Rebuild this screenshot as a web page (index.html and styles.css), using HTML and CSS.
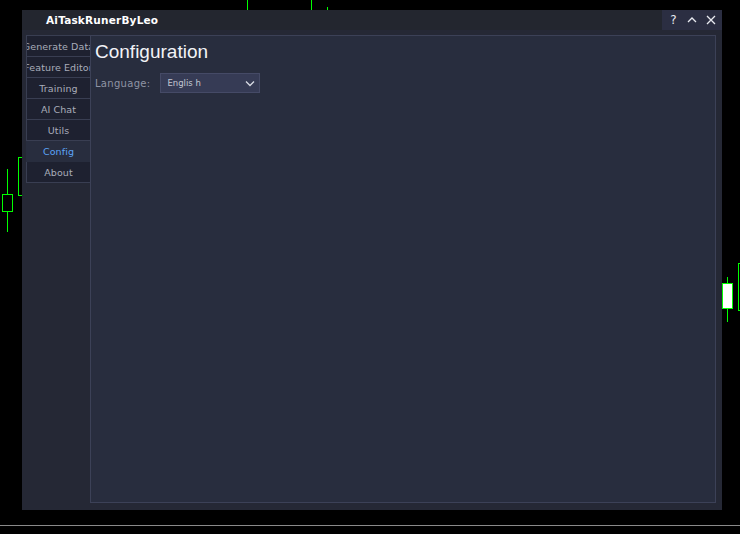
FILE: index.html
```html
<!DOCTYPE html>
<html lang="en">
<head>
    <meta charset="UTF-8">
    <title>AiTaskRunerByLeo</title>
    <link rel="stylesheet" href="styles.css">
</head>
<body>
    <!-- chart behind the tool window -->
    <svg class="chart" width="740" height="534" viewBox="0 0 740 534">
        <g stroke="#00ff00" stroke-width="1" fill="none">
            <line x1="247.5" y1="0" x2="247.5" y2="10"/>
            <line x1="311.5" y1="0" x2="311.5" y2="10"/>
            <line x1="327.5" y1="7" x2="327.5" y2="10"/>
            <line x1="7.5" y1="169" x2="7.5" y2="232"/>
            <rect x="2.5" y="194.5" width="10" height="17" fill="#000"/>
            <rect x="18.5" y="157.5" width="10" height="38" fill="#000"/>
            <line x1="727.5" y1="277" x2="727.5" y2="322"/>
            <rect x="722.5" y="283.5" width="10" height="25" fill="#fff"/>
            <rect x="738.5" y="263.5" width="10" height="47" fill="#000"/>
        </g>
        <line x1="0" y1="525.5" x2="740" y2="525.5" stroke="#8a8a8a"/>
    </svg>

    <div class="window">
        <div class="titlebar">
            <span class="title">AiTaskRunerByLeo</span>
            <div class="title-buttons">
                <span class="tb-btn">?</span>
                <svg class="tb-btn" width="10" height="10" viewBox="0 0 10 10">
                    <path d="M1 7 L5 3 L9 7" stroke="#e8eaf0" stroke-width="1.3" fill="none"/>
                </svg>
                <svg class="tb-btn" width="10" height="10" viewBox="0 0 10 10">
                    <path d="M1 1 L9 9 M9 1 L1 9" stroke="#e8eaf0" stroke-width="1.3" fill="none"/>
                </svg>
            </div>
        </div>
        <div class="main">
            <div class="sidebar">
                <div class="tab">Generate Data</div>
                <div class="tab">Feature Editor</div>
                <div class="tab">Training</div>
                <div class="tab">AI Chat</div>
                <div class="tab">Utils</div>
                <div class="tab active">Config</div>
                <div class="tab">About</div>
            </div>
            <div class="content">
                <h1>Configuration</h1>
                <div class="field">
                    <label for="lang">Language:</label>
                    <div class="select" id="lang">
                        <span>Englis h</span>
                        <svg width="10" height="7" viewBox="0 0 10 7">
                            <path d="M1 1.5 L5 5.5 L9 1.5" stroke="#d8dbe4" stroke-width="1.3" fill="none"/>
                        </svg>
                    </div>
                </div>
            </div>
        </div>
    </div>
</body>
</html>
```

FILE: styles.css
```css
body {
    margin: 0;
    width: 740px;
    height: 534px;
    background: #000;
    position: relative;
    overflow: hidden;
    font-family: "DejaVu Sans", sans-serif;
}

.chart {
    position: absolute;
    top: 0;
    left: 0;
}

.window {
    position: absolute;
    left: 22px;
    top: 10px;
    width: 700px;
    height: 500px;
    background: #252835;
    display: flex;
    flex-direction: column;
}

.titlebar {
    height: 20px;
    display: flex;
    align-items: center;
    justify-content: space-between;
    background: #23262f;
}

.title {
    margin-left: 24px;
    color: #fff;
    font-weight: bold;
    font-size: 10.5px;
    letter-spacing: 0.2px;
}

.title-buttons {
    width: 60px;
    height: 20px;
    background: #2b2e42;
    display: flex;
    align-items: center;
    justify-content: space-around;
    padding: 0 2px;
    box-sizing: border-box;
}

.tb-btn {
    color: #e8eaf0;
    font-size: 12px;
    width: 10px;
    text-align: center;
}

.main {
    flex: 1;
    display: flex;
    padding: 5px 6px 7px 4px;
}

.sidebar {
    width: 64px;
    display: flex;
    flex-direction: column;
}

.tab {
    height: 20px;
    line-height: 22px;
    background: #1e2130;
    border: 1px solid #393e52;
    border-right: none;
    border-top: none;
    color: #a9adba;
    font-size: 9.5px;
    letter-spacing: 0.1px;
    text-align: center;
    white-space: nowrap;
    overflow: hidden;
    display: flex;
    justify-content: center;
}

.tab:first-child {
    border-top: 1px solid #393e52;
}

.tab.active {
    background: #282d3e;
    border-color: #282d3e;
    color: #5ca4f7;
}

.content {
    flex: 1;
    background: #282d3e;
    border: 1px solid #3c4157;
    padding: 4px;
}

h1 {
    margin: 0;
    font-family: "Liberation Sans", Arial, sans-serif;
    font-weight: normal;
    font-size: 19px;
    color: #f2f3f7;
    line-height: 24px;
}

.field {
    display: flex;
    align-items: center;
    margin-top: 9px;
    gap: 10px;
}

label {
    color: #8f94a4;
    font-size: 10px;
    letter-spacing: 0.3px;
}

.select {
    width: 100px;
    height: 20px;
    box-sizing: border-box;
    background: #363b55;
    border: 1px solid #454a66;
    display: flex;
    align-items: center;
    justify-content: space-between;
    padding: 0 4px 0 6px;
    color: #c3c7d3;
    font-size: 8.5px;
}
```
